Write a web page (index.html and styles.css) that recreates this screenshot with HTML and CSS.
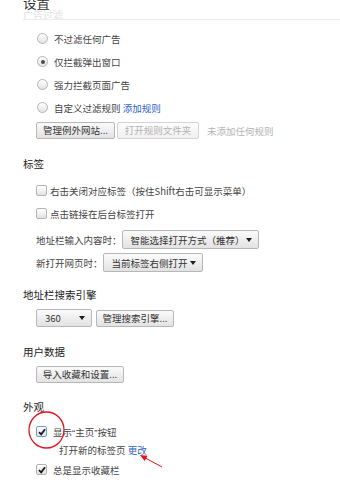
FILE: index.html
```html
<!DOCTYPE html>
<html lang="zh-CN">
<head>
<meta charset="utf-8">
<title>设置</title>
<link rel="stylesheet" href="styles.css">
</head>
<body>
<div class="page">
  <div class="header">
    <div class="title">设置</div>
    <div class="sub">广告过滤</div>
  </div>

  <div class="radios">
    <div class="row"><span class="radio"></span><span>不过滤任何广告</span></div>
    <div class="row"><span class="radio on"></span><span>仅拦截弹出窗口</span></div>
    <div class="row"><span class="radio"></span><span>强力拦截页面广告</span></div>
    <div class="row"><span class="radio"></span><span>自定义过滤规则 <a class="link">添加规则</a></span></div>
  </div>
  <div class="ctl-row r-btns">
    <span class="btn w79">管理例外网站...</span>
    <span class="btn disabled w82">打开规则文件夹</span>
    <span class="note">未添加任何规则</span>
  </div>

  <h3 class="sec s-tabs">标签</h3>
  <div class="cbs">
    <div class="row"><span class="cb"></span><span>右击关闭对应标签（按住Shift右击可显示菜单）</span></div>
    <div class="row"><span class="cb"></span><span>点击链接在后台标签打开</span></div>
  </div>
  <div class="ctl-row r-sel1">
    <span>地址栏输入内容时：</span>
    <span class="select w137"><span>智能选择打开方式（推荐）</span><span class="tri"></span></span>
  </div>
  <div class="ctl-row r-sel2">
    <span>新打开网页时：</span>
    <span class="select w100"><span>当前标签右侧打开</span><span class="tri"></span></span>
  </div>

  <h3 class="sec s-search">地址栏搜索引擎</h3>
  <div class="ctl-row r-search">
    <span class="select w56"><span>360</span><span class="tri"></span></span>
    <span class="btn w78">管理搜索引擎...</span>
  </div>

  <h3 class="sec s-user">用户数据</h3>
  <div class="ctl-row r-import">
    <span class="btn w88">导入收藏和设置...</span>
  </div>

  <h3 class="sec s-look">外观</h3>
  <div class="cbs2">
    <div class="row"><span class="cb checked focus"><svg viewBox="0 0 10 10" width="10" height="10"><path d="M2 5.2 L4.2 7.4 L8 2.2" fill="none" stroke="#1a1a1a" stroke-width="1.8"/></svg></span><span>显示<span class="q">“</span>主页<span class="q">”</span>按钮</span></div>
    <div class="subrow">打开新的标签页 <a class="link">更改</a></div>
    <div class="row"><span class="cb checked"><svg viewBox="0 0 10 10" width="10" height="10"><path d="M2 5.2 L4.2 7.4 L8 2.2" fill="none" stroke="#1a1a1a" stroke-width="1.8"/></svg></span><span>总是显示收藏栏</span></div>
  </div>

  <svg class="annot" width="340" height="500" viewBox="0 0 340 500">
    <ellipse cx="46.5" cy="430" rx="17.5" ry="18" fill="none" stroke="#e3121b" stroke-width="1.3"/>
    <line x1="162" y1="467" x2="145" y2="457.8" stroke="#e3121b" stroke-width="1"/>
    <polygon points="140,455 147.5,455.7 144.7,461" fill="#e3121b"/>
  </svg>
</div>
</body>
</html>
```

FILE: styles.css
```css
body {
  margin: 0;
  background: #ffffff;
  font-family: "Noto Sans CJK SC", "Noto Sans", sans-serif;
  font-size: 9.5px;
  color: #444444;
}

.page {
  position: relative;
  width: 340px;
  height: 500px;
  overflow: hidden;
}

.header {
  margin-left: 23px;
  height: 19px;
  border-bottom: 1px solid #ebebeb;
  overflow: hidden;
}

.title {
  font-size: 13.5px;
  line-height: 14px;
  margin-top: -5px;
  color: #333333;
}

.sub {
  font-size: 10px;
  line-height: 10px;
  margin-top: 1px;
  color: #e2e2e2;
}

.radios {
  margin-top: 7px;
  padding-left: 37px;
}

.row {
  display: flex;
  align-items: center;
  height: 23px;
  white-space: nowrap;
}

.radio {
  width: 11px;
  height: 11px;
  box-sizing: border-box;
  border-radius: 50%;
  border: 1px solid #b3b3b3;
  background: linear-gradient(#ffffff, #e3e3e3);
  margin-right: 6px;
  flex: none;
  display: flex;
  align-items: center;
  justify-content: center;
}

.radio.on::after {
  content: "";
  width: 4px;
  height: 4px;
  border-radius: 50%;
  background: #4a4a4a;
}

.link {
  color: #2f62c4;
}

.q {
  font-family: "Liberation Sans", "Noto Sans", sans-serif;
}

.ctl-row {
  display: flex;
  align-items: center;
  padding-left: 36px;
  white-space: nowrap;
}

.r-btns { margin-top: 3px; height: 17px; gap: 2px; }
.r-sel1 { margin-top: 5px; height: 19px; }
.r-sel2 { margin-top: 4px; height: 19px; }
.r-search { margin-top: 6px; height: 18px; gap: 4px; }
.r-import { margin-top: 6px; height: 17px; }

.btn {
  display: inline-block;
  height: 17px;
  box-sizing: border-box;
  border: 1px solid #b7b7b7;
  border-radius: 2px;
  background: linear-gradient(#fbfbfb, #e2e2e2);
  line-height: 15px;
  text-align: center;
  color: #333333;
}

.btn.disabled {
  color: #b3b3b3;
  border-color: #d3d3d3;
  background: linear-gradient(#fdfdfd, #f0f0f0);
}

.w79 { width: 79px; }
.w82 { width: 82px; }
.w78 { width: 78px; }
.w88 { width: 88px; }
.w137 { width: 137px; }
.w100 { width: 100px; }
.w56 { width: 56px; }

.note {
  margin-left: 6px;
  color: #b3b3b3;
}

.select {
  display: flex;
  align-items: center;
  justify-content: space-between;
  height: 100%;
  box-sizing: border-box;
  padding: 0 6px 0 8px;
  border: 1px solid #b7b7b7;
  border-radius: 2px;
  background: linear-gradient(#fbfbfb, #e2e2e2);
  color: #333333;
}

.tri {
  width: 0;
  height: 0;
  border-left: 3.5px solid transparent;
  border-right: 3.5px solid transparent;
  border-top: 4px solid #1e1e1e;
}

.sec {
  margin: 0 0 0 23px;
  font-size: 10.5px;
  line-height: 16px;
  font-weight: normal;
  color: #222222;
}

.s-tabs { margin-top: 17px; }
.s-search { margin-top: 15px; }
.s-user { margin-top: 17px; }
.s-look { margin-top: 16px; }

.cbs {
  margin-top: 7px;
  padding-left: 36px;
}

.cbs .cb { margin-right: 3px; }

.cbs2 {
  margin-top: 5px;
  padding-left: 36px;
}

.cbs2 .cb { margin-right: 6px; }

.cb {
  width: 11px;
  height: 11px;
  box-sizing: border-box;
  border: 1px solid #b3b3b3;
  border-radius: 2px;
  background: linear-gradient(#ffffff, #e3e3e3);
  flex: none;
  display: flex;
  align-items: center;
  justify-content: center;
  overflow: visible;
}

.cb svg {
  flex: none;
}

.cb.focus {
  border-color: #6f9be0;
}

.subrow {
  height: 15px;
  line-height: 15px;
  padding-left: 23px;
  white-space: nowrap;
}

.annot {
  position: absolute;
  left: 0;
  top: 0;
  pointer-events: none;
}
```
